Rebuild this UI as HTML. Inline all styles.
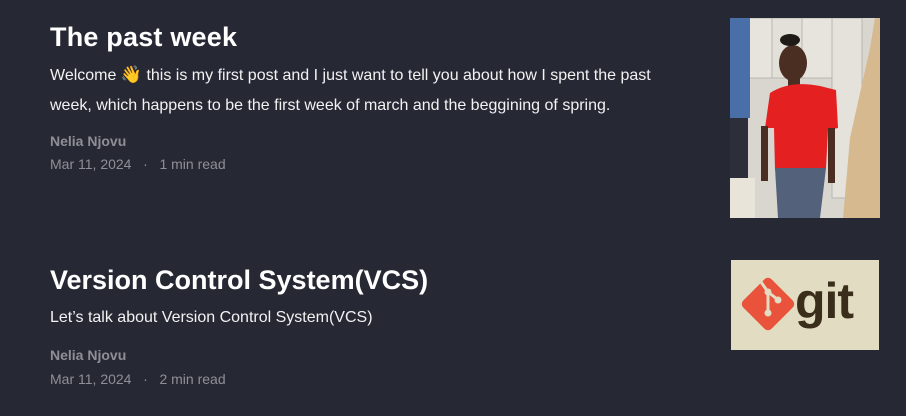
<!DOCTYPE html>
<html><head><meta charset="utf-8"><style>
html,body{margin:0;padding:0;background:#262834;width:906px;height:416px;overflow:hidden}
body{font-family:"Liberation Sans",sans-serif;position:relative}
.t{position:absolute;left:50px;color:#fff;font-weight:bold;font-size:27px;letter-spacing:0}
.p{position:absolute;left:50px;color:#f2f2f2;font-size:16px;line-height:30px;width:645px}
.a{position:absolute;left:50px;color:#8e8f96;font-size:14px;font-weight:bold}
.d{position:absolute;left:50px;color:#8e8f96;font-size:14px}
</style></head><body>
<div class="t" style="top:22px;letter-spacing:0.2px">The past week</div>
<div class="p" style="top:60px">Welcome <span style="font-size:17px">👋</span> this is my first post and I just want to tell you about how I spent the past week, which happens to be the first week of march and the beggining of spring.</div>
<div class="a" style="top:133px">Nelia Njovu</div>
<div class="d" style="top:156px">Mar 11, 2024 &nbsp;&nbsp;·&nbsp;&nbsp; 1 min read</div>
<svg style="position:absolute;left:730px;top:18px" width="150" height="200" viewBox="0 0 150 200">
<rect width="150" height="200" fill="#d8d6cf"/>
<rect x="10" y="0" width="32" height="60" fill="#e6e4dd" stroke="#b9b7b0"/>
<rect x="42" y="0" width="30" height="60" fill="#e2e0d9" stroke="#b9b7b0"/>
<rect x="72" y="0" width="30" height="60" fill="#e6e4dd" stroke="#b9b7b0"/>
<rect x="102" y="0" width="30" height="180" fill="#e4e2db" stroke="#b9b7b0"/>
<rect x="0" y="0" width="20" height="100" fill="#4a6fa8"/>
<rect x="0" y="100" width="18" height="60" fill="#2c2f3a"/>
<rect x="0" y="160" width="25" height="40" fill="#e8e4da"/>
<polygon points="145,0 150,0 150,200 113,200 120,120 140,30" fill="#d6b98f"/>
<ellipse cx="63" cy="45" rx="14" ry="18" fill="#4a2e22"/>
<ellipse cx="60" cy="22" rx="10" ry="6" fill="#1f1a18"/>
<rect x="58" y="58" width="12" height="10" fill="#4a2e22"/>
<path d="M40 75 Q60 62 90 68 L106 72 L108 110 L98 112 L96 150 L45 152 L44 110 L35 110 Z" fill="#e42020"/>
<path d="M45 150 L96 150 L90 200 L48 200 Z" fill="#54617a"/>
<rect x="31" y="108" width="7" height="55" fill="#4a2e22"/>
<rect x="98" y="110" width="7" height="55" fill="#4a2e22"/>
</svg>
<div class="t" style="top:265px">Version Control System(VCS)</div>
<div class="p" style="top:303px">Let’s talk about Version Control System(VCS)</div>
<div class="a" style="top:347px">Nelia Njovu</div>
<div class="d" style="top:371px">Mar 11, 2024 &nbsp;&nbsp;·&nbsp;&nbsp; 2 min read</div>
<svg style="position:absolute;left:731px;top:260px" width="148" height="90" viewBox="0 0 148 90">
<rect width="148" height="90" fill="#e2dcc2"/>
<g transform="translate(37,44) rotate(45)"><rect x="-20" y="-20" width="40" height="40" rx="5" fill="#e9533c"/></g>
<path d="M30 22 L37 32 L37 52 M37 32 L46 39" stroke="#e2dcc2" stroke-width="3" fill="none"/>
<circle cx="37" cy="32" r="3.5" fill="#e2dcc2"/><circle cx="37" cy="53" r="3.5" fill="#e2dcc2"/><circle cx="47" cy="40" r="3.5" fill="#e2dcc2"/>
<text x="64" y="58" font-family="Liberation Sans,sans-serif" font-weight="bold" font-size="50" fill="#3a2e1a" letter-spacing="-1">git</text>
</svg>
</body></html>
